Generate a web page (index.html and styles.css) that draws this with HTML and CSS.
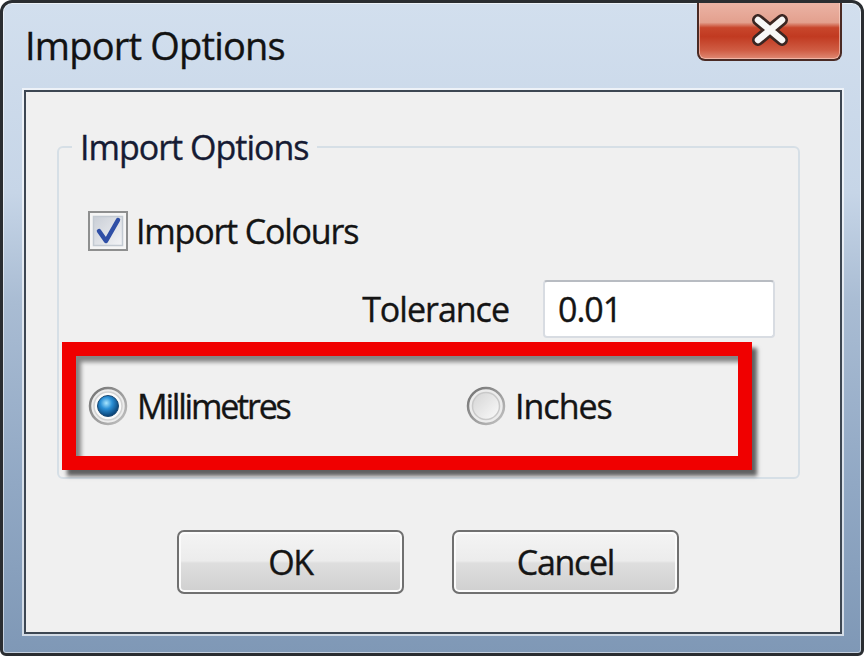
FILE: index.html
```html
<!DOCTYPE html>
<html lang="en">
<head>
<meta charset="utf-8">
<title>Import Options</title>
<link rel="stylesheet" href="styles.css">
</head>
<body>
<div class="window">
  <div class="titlebar">
    <div class="title">Import Options</div>
    <div class="close">
      <svg width="38" height="32" viewBox="0 0 38 32">
        <path d="M7 6 L31 26 M31 6 L7 26" stroke="#3b2622" stroke-width="12" stroke-linecap="round"/>
        <path d="M7 6 L31 26 M31 6 L7 26" stroke="#f7f7f7" stroke-width="6.5" stroke-linecap="round"/>
      </svg>
    </div>
  </div>
  <div class="client">
    <fieldset class="group">
      <legend class="group-title">Import Options</legend>
      <label class="check-row">
        <svg class="checkbox" width="40" height="40" viewBox="0 0 40 40">
          <defs>
            <linearGradient id="cbfill" x1="0" y1="0" x2="1" y2="1">
              <stop offset="0" stop-color="#c9ced6"/>
              <stop offset="1" stop-color="#f3f4f6"/>
            </linearGradient>
          </defs>
          <rect x="1" y="1" width="38" height="38" fill="#f5f5f5" stroke="#8e8f8f" stroke-width="2"/>
          <rect x="5.5" y="5.5" width="29" height="29" fill="url(#cbfill)" stroke="#c3cad2" stroke-width="1.5"/>
          <path d="M11 20 L18 30 L30 9" fill="none" stroke="#2f4fa6" stroke-width="4.5" stroke-linejoin="round" stroke-linecap="round"/>
        </svg>
        <span>Import Colours</span>
      </label>
      <div class="tol-row">
        <span>Tolerance</span>
        <div class="input">0.01</div>
      </div>
      <div class="highlight">
        <label class="opt">
          <svg class="radio" width="40" height="40" viewBox="0 0 40 40">
            <defs>
              <linearGradient id="ring1" x1="0" y1="0" x2="1" y2="1">
                <stop offset="0" stop-color="#6f6f6f"/>
                <stop offset="1" stop-color="#c4c4c4"/>
              </linearGradient>
              <radialGradient id="ball" cx="0.42" cy="0.36" r="0.62">
                <stop offset="0" stop-color="#a8e6ff"/>
                <stop offset="0.45" stop-color="#2a8fd6"/>
                <stop offset="1" stop-color="#0a4478"/>
              </radialGradient>
            </defs>
            <circle cx="20" cy="20" r="18" fill="#ececec" stroke="url(#ring1)" stroke-width="2.5"/>
            <circle cx="20" cy="20" r="14" fill="#fafafa" stroke="#d2d2d2" stroke-width="1.5"/>
            <circle cx="20" cy="20" r="10.5" fill="url(#ball)" stroke="#1b4a74" stroke-width="1"/>
          </svg>
          <span class="tight">Millimetres</span>
        </label>
        <label class="opt">
          <svg class="radio" width="40" height="40" viewBox="0 0 40 40">
            <defs>
              <linearGradient id="ring2" x1="0" y1="0" x2="1" y2="1">
                <stop offset="0" stop-color="#6f6f6f"/>
                <stop offset="1" stop-color="#c4c4c4"/>
              </linearGradient>
              <linearGradient id="empty" x1="0" y1="0" x2="1" y2="1">
                <stop offset="0" stop-color="#d4d4d4"/>
                <stop offset="1" stop-color="#fbfbfb"/>
              </linearGradient>
            </defs>
            <circle cx="20" cy="20" r="18" fill="#ececec" stroke="url(#ring2)" stroke-width="2.5"/>
            <circle cx="20" cy="20" r="13.5" fill="url(#empty)" stroke="#c9c9c9" stroke-width="1.5"/>
          </svg>
          <span>Inches</span>
        </label>
      </div>
    </fieldset>
    <div class="buttons">
      <div class="btn">OK</div>
      <div class="btn">Cancel</div>
    </div>
  </div>
</div>
</body>
</html>
```
FILE: styles.css
```css
html, body {
  margin: 0;
  padding: 0;
  background: #ffffff;
}

body {
  font-family: "Open Sans", "Noto Sans", "DejaVu Sans", sans-serif;
  color: #141414;
  -webkit-text-stroke: 0.35px currentColor;
}

.window {
  width: 864px;
  height: 656px;
  box-sizing: border-box;
  border: 3px solid #2a2d31;
  border-radius: 12px 12px 6px 6px;
  background: linear-gradient(to bottom, #d2dfee 0px, #c6d5e7 190px, #a9bcd3 300px, #91a8c4 480px, #7f98b6 100%);
  box-shadow: inset 0 0 0 1px rgba(255, 255, 255, 0.55);
  display: flex;
  flex-direction: column;
  overflow: hidden;
}

.titlebar {
  height: 87px;
  flex-shrink: 0;
  display: flex;
  justify-content: space-between;
  align-items: flex-start;
}

.title {
  margin: 22px 0 0 22px;
  font-size: 38px;
  line-height: 40px;
  letter-spacing: -0.8px;
  color: #121212;
}

.close {
  width: 145px;
  height: 61px;
  margin: -3px 19px 0 0;
  box-sizing: border-box;
  border: 2px solid #4a2a24;
  border-top: none;
  border-radius: 0 0 8px 8px;
  background: linear-gradient(to bottom, #ecb6a8 0%, #e3a08e 38%, #c8462c 47%, #c13a21 62%, #cf5c43 85%, #e08a74 100%);
  box-shadow: inset 0 0 0 1px rgba(255, 220, 210, 0.55);
  display: flex;
  align-items: center;
  justify-content: center;
}

.client {
  flex: 1;
  margin: 0 19px 19px 21px;
  border: 2px solid #3d4753;
  background: #f0f0f0;
  box-shadow: 0 0 0 2px rgba(255, 255, 255, 0.65);
  display: flex;
  flex-direction: column;
}

.group {
  margin: 37px 40px 0 31px;
  padding: 0 23px 7px 0;
  border: 2px solid #d6dfe6;
  border-radius: 6px;
  font-size: 34px;
  letter-spacing: -1px;
}

.group-title {
  margin-left: 13px;
  padding: 0 8px;
  line-height: 36px;
  color: #161b33;
}

.check-row {
  margin: 46px 0 0 29px;
  height: 40px;
  display: flex;
  align-items: center;
  gap: 8px;
  line-height: 40px;
  letter-spacing: -1.2px;
}

.tol-row {
  margin-top: 29px;
  display: flex;
  justify-content: flex-end;
  align-items: center;
  gap: 34px;
  line-height: 40px;
}

.input {
  width: 232px;
  height: 58px;
  box-sizing: border-box;
  border: 2px solid #d8dce2;
  border-top-color: #b8bcc2;
  border-radius: 4px;
  background: #ffffff;
  padding-left: 13px;
  line-height: 54px;
}

.highlight {
  margin: 4px 0 0 3px;
  width: 690px;
  height: 128px;
  box-sizing: border-box;
  border: 14px solid #f00000;
  padding-left: 12px;
  display: flex;
  align-items: center;
  box-shadow: 5px 6px 4px rgba(0, 0, 0, 0.6), inset 5px 6px 4px rgba(0, 0, 0, 0.45);
}

.opt {
  display: flex;
  align-items: center;
  gap: 9px;
  line-height: 40px;
}

.opt:first-child {
  width: 378px;
}

.tight {
  letter-spacing: -2.2px;
}

.buttons {
  margin-top: 51px;
  padding-right: 10px;
  display: flex;
  justify-content: center;
  gap: 48px;
}

.btn {
  width: 227px;
  height: 64px;
  box-sizing: border-box;
  border: 2px solid #707070;
  border-radius: 7px;
  background: linear-gradient(to bottom, #f4f4f4 0%, #ececec 48%, #dedede 52%, #d0d0d0 100%);
  box-shadow: inset 0 0 0 2px #fbfbfb;
  display: flex;
  align-items: center;
  justify-content: center;
  font-size: 34px;
  letter-spacing: -1.3px;
  color: #151515;
}
```
